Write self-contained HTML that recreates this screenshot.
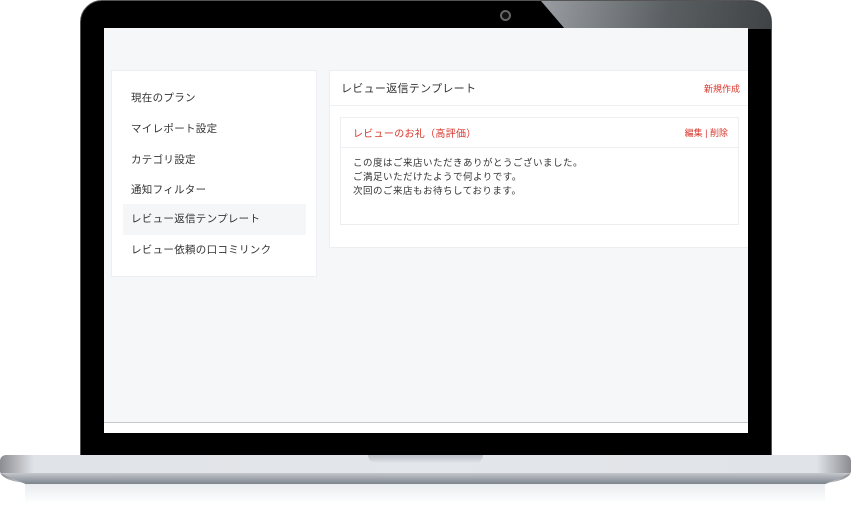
<!DOCTYPE html><html><head><meta charset="utf-8"><style>
*{margin:0;padding:0;box-sizing:border-box}
body{width:851px;height:508px;background:#fff;position:relative;overflow:hidden;font-family:"Liberation Sans","Noto Sans CJK JP",sans-serif}
.bezel{position:absolute;left:80px;top:0;width:692px;height:458px;background:#000;border-radius:22px 22px 0 0;border:1px solid #555;overflow:hidden}
.glare{position:absolute;left:460px;top:0;width:240px;height:460px;background:linear-gradient(100deg,#9a9ea2,#5a5f62 40%,#2a2d2e);clip-path:polygon(0 0,100% 0,100% 100%,98% 100%,98% 28px,10% 28px)}
.cam{position:absolute;left:419px;top:9px;width:11px;height:11px;border:2px solid #666;border-radius:50%;background:#111}
.screen{position:absolute;left:104px;top:28px;width:644px;height:405px;background:#f6f7f9;overflow:hidden}
.card{position:absolute;background:#fff;border:1px solid #eceef1}
.side{left:7px;top:42px;width:206px;height:207px}
.side .t{position:absolute;left:19px;font-size:10.5px;color:#333;letter-spacing:.3px}
.act{position:absolute;left:11px;top:133px;width:183px;height:31px;background:#f5f6f8}
.main{left:225px;top:42px;width:425px;height:178px}
.red{color:#d9362b}
.inner{position:absolute;left:10px;top:46px;width:399px;height:108px;border:1px solid #eceef1}
.base{position:absolute;left:0;top:455px;width:851px;height:28px;background:linear-gradient(90deg,#8a8c90 0,#e0e3e7 4%,#e3e6ea 50%,#e0e3e7 96%,#8a8c90 100%);border-radius:6px 6px 30px 30px/6px 6px 12px 12px}
.lip{position:absolute;left:0;top:473px;width:851px;height:11px;background:linear-gradient(#c4c8cd,#7d848c);clip-path:polygon(0 0,100% 0,97% 100%,3% 100%)}
.notch{position:absolute;left:368px;top:455px;width:115px;height:8px;background:linear-gradient(#b9bfc6,#e1e4e8);border-radius:0 0 8px 8px}
.refl{position:absolute;left:25px;top:484px;width:800px;height:20px;background:linear-gradient(#e9ecef,#fff)}
</style></head><body>
<div class="bezel"><div class="glare"></div><div class="cam"></div></div>
<div class="screen">
 <div class="card side">
  <div class="act"></div>
  <div class="t" style="top:19px">現在のプラン</div>
  <div class="t" style="top:50px">マイレポート設定</div>
  <div class="t" style="top:81px">カテゴリ設定</div>
  <div class="t" style="top:111px">通知フィルター</div>
  <div class="t red" style="top:140px">レビュー返信テンプレート</div>
  <div class="t" style="top:171px">レビュー依頼の口コミリンク</div>
 </div>
 <div class="card main">
  <div style="position:absolute;left:11px;top:9px;font-size:11px;letter-spacing:.3px;color:#333">レビュー返信テンプレート</div>
  <div class="red" style="position:absolute;right:13px;top:11px;font-size:9px">新規作成</div>
  <div style="position:absolute;left:0;top:34px;width:100%;border-top:1px solid #eef0f2"></div>
  <div class="inner">
   <div class="red" style="position:absolute;left:12px;top:7px;font-size:10px;letter-spacing:.3px">レビューのお礼（高評価）</div>
   <div class="red" style="position:absolute;right:10px;top:8px;font-size:9px">編集 | 削除</div>
   <div style="position:absolute;left:0;top:29px;width:100%;border-top:1px solid #eef0f2"></div>
   <div style="position:absolute;left:12px;top:39px;font-size:9.5px;letter-spacing:.5px;line-height:14px;color:#333">この度はご来店いただきありがとうございました。<br>ご満足いただけたようで何よりです。<br>次回のご来店もお待ちしております。</div>
  </div>
 </div>
 <div style="position:absolute;left:0;top:394px;width:644px;height:11px;background:#fff;border-top:1px solid #c8c8c8"></div>
</div>
<div class="refl"></div>
<div class="base"></div>
<div class="lip"></div>
<div class="notch"></div>
</body></html>
